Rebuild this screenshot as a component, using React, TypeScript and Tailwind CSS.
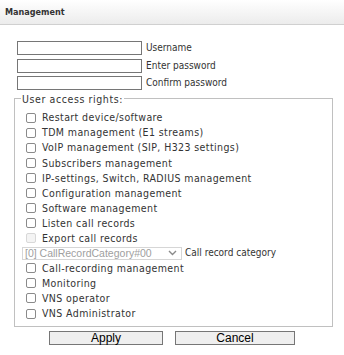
const rights = [
  'Restart device/software',
  'TDM management (E1 streams)',
  'VoIP management (SIP, H323 settings)',
  'Subscribers management',
  'IP-settings, Switch, RADIUS management',
  'Configuration management',
  'Software management',
  'Listen call records',
]

const rights2 = ['Call-recording management', 'Monitoring', 'VNS operator', 'VNS Administrator']

function Check({ label, disabled }: { label: string; disabled?: boolean }) {
  return (
    <div className="flex items-center h-[15.08px]">
      <span
        className={`w-[10px] h-[10px] rounded-[2px] border shrink-0 ${
          disabled ? 'border-[#d8d8d8] bg-[#f4f4f4]' : 'border-[#8a8a8a] bg-white'
        }`}
      />
      <span className="ml-[6px] text-[10.5px] tracking-[0.4px] text-[#333] whitespace-nowrap">{label}</span>
    </div>
  )
}

function Field({ label }: { label: string }) {
  return (
    <div className="flex items-center h-[14px] mb-[3.5px]">
      <div className="w-[125px] h-[14px] border border-[#767676] bg-white" />
      <span className="ml-[4px] text-[#333]">{label}</span>
    </div>
  )
}

export default function App() {
  return (
    <div
      className="w-[344px] h-[355px] bg-white text-[10px] leading-none"
      style={{ fontFamily: '"DejaVu Sans Condensed", "DejaVu Sans", sans-serif' }}
    >
      {/* Header */}
      <div className="h-[25px] flex items-center px-[5px] bg-gradient-to-b from-white to-[#ececec] border-b border-[#d0d0d0]">
        <span className="font-bold text-[9px] text-[#333]">Management</span>
      </div>

      <div className="pl-[17px] pt-[16px]">
        <Field label="Username" />
        <Field label="Enter password" />
        <Field label="Confirm password" />
      </div>

      {/* Access rights */}
      <fieldset className="mx-[14px] mt-[1px] w-[319px] h-[233px] border border-[#c0c0c0] pl-[11px] pt-[1px]">
        <legend className="ml-[-5px] px-[1px] text-[10.5px] tracking-[0.6px] text-[#333]">User access rights:</legend>
        <div className="flex flex-col pt-[5px]">
          {rights.map((r) => (
            <Check key={r} label={r} />
          ))}
          <Check label="Export call records" disabled />
          <div className="flex items-center h-[15.08px] ml-[-4px]">
            <div
              className="flex items-center justify-between w-[160px] h-[13px] border border-[#d6d6d6] pl-[2px] pr-[4px] text-[10.5px] text-[#a0a0a0] whitespace-nowrap overflow-hidden"
              style={{ fontFamily: '"Liberation Sans", Arial, sans-serif' }}
            >
              <span>[0] CallRecordCategory#00</span>
              <svg width="9" height="6" viewBox="0 0 9 6" fill="none" className="shrink-0">
                <path d="M1 1l3.5 3.5L8 1" stroke="#8a8a8a" strokeWidth="1.4" />
              </svg>
            </div>
            <span className="ml-[3px] text-[#333] whitespace-nowrap">Call record category</span>
          </div>
          {rights2.map((r) => (
            <Check key={r} label={r} />
          ))}
        </div>
      </fieldset>

      {/* Buttons */}
      <div
        className="flex pl-[49px] pt-[4px] gap-[12px] text-[12px] text-black"
        style={{ fontFamily: '"Liberation Sans", Arial, sans-serif' }}
      >
        <button className="w-[114px] h-[14px] border border-[#767676] bg-[#efefef] leading-none">Apply</button>
        <button className="w-[120px] h-[14px] border border-[#767676] bg-[#efefef] leading-none">Cancel</button>
      </div>
    </div>
  )
}
